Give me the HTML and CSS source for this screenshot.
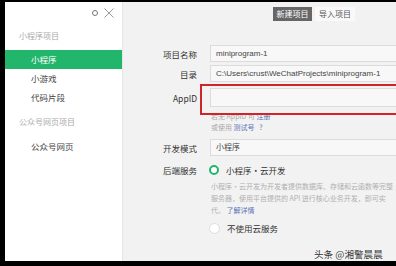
FILE: index.html
```html
<!DOCTYPE html>
<html>
<head>
  <title>新建项目</title>
  <link rel="stylesheet" href="styles.css">
</head>
<body>
  <div class="window">
    <div class="sidebar">
      <div class="side-top">
        <span class="gear"></span>
        <svg class="close" width="10" height="10" viewBox="0 0 10 10">
          <path d="M0.5 0.5 L9.5 9.5 M9.5 0.5 L0.5 9.5" stroke="#999" stroke-width="1" fill="none"/>
        </svg>
      </div>
      <div class="group-title">小程序项目</div>
      <div class="side-item active">小程序</div>
      <div class="side-item">小游戏</div>
      <div class="side-item">代码片段</div>
      <div class="group-title second">公众号网页项目</div>
      <div class="side-item">公众号网页</div>
    </div>

    <div class="main">
      <div class="toolbar">
        <div class="tb-btn current">新建项目</div>
        <div class="tb-btn">导入项目</div>
      </div>

      <div class="form">
        <div class="row">
          <div class="label">项目名称</div>
          <div class="field"><div class="input">miniprogram-1</div></div>
        </div>
        <div class="row">
          <div class="label">目录</div>
          <div class="field"><div class="input">C:\Users\crust\WeChatProjects\miniprogram-1</div></div>
        </div>
        <div class="row appid">
          <div class="label">AppID</div>
          <div class="field"><div class="input tall"></div></div>
        </div>
        <div class="hints">
          <div>若无 AppID 可 <span class="link">注册</span></div>
          <div>或使用 <span class="link">测试号</span> <span class="link q">?</span></div>
        </div>
        <div class="row">
          <div class="label">开发模式</div>
          <div class="field"><div class="input">小程序</div></div>
        </div>
        <div class="row radio-row">
          <div class="label">后端服务</div>
          <div class="field"><span class="radio on"></span>小程序·云开发</div>
        </div>
        <div class="desc">
          <div>小程序·云开发为开发者提供数据库、存储和云函数等完整</div>
          <div>服务器，使用平台提供的 API 进行核心业务开发，即可实</div>
          <div>代。 <span class="link">了解详情</span></div>
        </div>
        <div class="row radio-row last">
          <div class="label"></div>
          <div class="field"><span class="radio"></span>不使用云服务</div>
        </div>
      </div>

      <div class="mark"></div>
    </div>
  </div>
  <div class="watermark">头条 @湘警晨晨</div>
</body>
</html>
```

FILE: styles.css
```css
body {
  margin: 0;
  background: #000;
  font-family: "Noto Sans CJK SC", "Liberation Sans", sans-serif;
  width: 396px;
  height: 266px;
  overflow: hidden;
  position: relative;
}
.window {
  display: flex;
  margin: 2px 0 0 5px;
  height: 259px;
  background: #f2f2f2;
}
.sidebar {
  width: 117px;
  background: #fff;
  border-right: 1px solid #e6e6e6;
  flex-shrink: 0;
}
.side-top {
  height: 22px;
  display: flex;
  justify-content: flex-end;
  align-items: center;
  gap: 6px;
  padding-right: 8px;
}
.gear {
  width: 4px;
  height: 4px;
  border: 1.2px solid #777;
  border-radius: 50%;
}
.close {
  display: block;
}
.group-title {
  height: 26px;
  line-height: 24px;
  padding-left: 14px;
  font-size: 8px;
  color: #aaa;
}
.group-title.second {
  margin-top: 1px;
  height: 29px;
  line-height: 28px;
}
.side-item {
  height: 19px;
  line-height: 19px;
  padding-left: 26px;
  font-size: 8.5px;
  color: #444;
}
.side-item.active {
  background: #22b56c;
  color: #fff;
}
.main {
  flex: 1;
  overflow: hidden;
  position: relative;
}
.toolbar {
  display: flex;
  justify-content: flex-end;
  gap: 3px;
  padding: 5px 41px 0 0;
}
.tb-btn {
  width: 40px;
  height: 14px;
  line-height: 14px;
  text-align: center;
  font-size: 8px;
  color: #555;
  background: #f9f9f9;
}
.tb-btn.current {
  width: 39px;
  background: #666;
  color: #fff;
}
.form {
  margin-top: 24px;
  width: 360px;
}
.row {
  display: flex;
  align-items: center;
  margin-bottom: 3px;
}
.label {
  width: 74px;
  text-align: right;
  font-size: 8.5px;
  color: #333;
  flex-shrink: 0;
}
.field {
  margin-left: 13px;
  flex: 1;
  font-size: 8.5px;
  color: #333;
  display: flex;
  align-items: center;
}
.input {
  width: 100%;
  height: 15px;
  line-height: 15px;
  border: 1px solid #dcdcdc;
  background: #f8f8f8;
  padding-left: 5px;
  font-family: "Liberation Sans", "Noto Sans CJK SC", sans-serif;
  font-size: 8px;
  color: #444;
  white-space: nowrap;
}
.input.tall {
  height: 17px;
}
.row.appid {
  margin-top: 6px;
  margin-bottom: 0;
}
.hints {
  padding-left: 88px;
  font-size: 7px;
  line-height: 11px;
  color: #aaa;
  margin: 4px 0 6px;
}
.link {
  color: #5b72b8;
}
.q {
  margin-left: 3px;
}
.radio-row {
  margin-top: 7px;
  height: 14px;
}
.radio {
  width: 6px;
  height: 6px;
  border: 2.5px solid #22b56c;
  border-radius: 50%;
  background: #fff;
  margin: 0 7px 0 -1px;
}
.radio:not(.on) {
  border: 1px solid #ddd;
  width: 9px;
  height: 9px;
}
.desc {
  padding-left: 88px;
  font-size: 7px;
  line-height: 12px;
  color: #b0b0b0;
  white-space: nowrap;
}
.radio-row.last {
  margin-top: 5px;
}
.mark {
  position: absolute;
  left: 77px;
  top: 82px;
  width: 240px;
  height: 27px;
  border: 2.5px solid #d2232a;
}
.watermark {
  position: absolute;
  left: 314px;
  top: 247px;
  font-size: 9.6px;
  color: #333;
  text-shadow: 0 0 2px #fff, 0 0 2px #fff;
  white-space: nowrap;
}
```
